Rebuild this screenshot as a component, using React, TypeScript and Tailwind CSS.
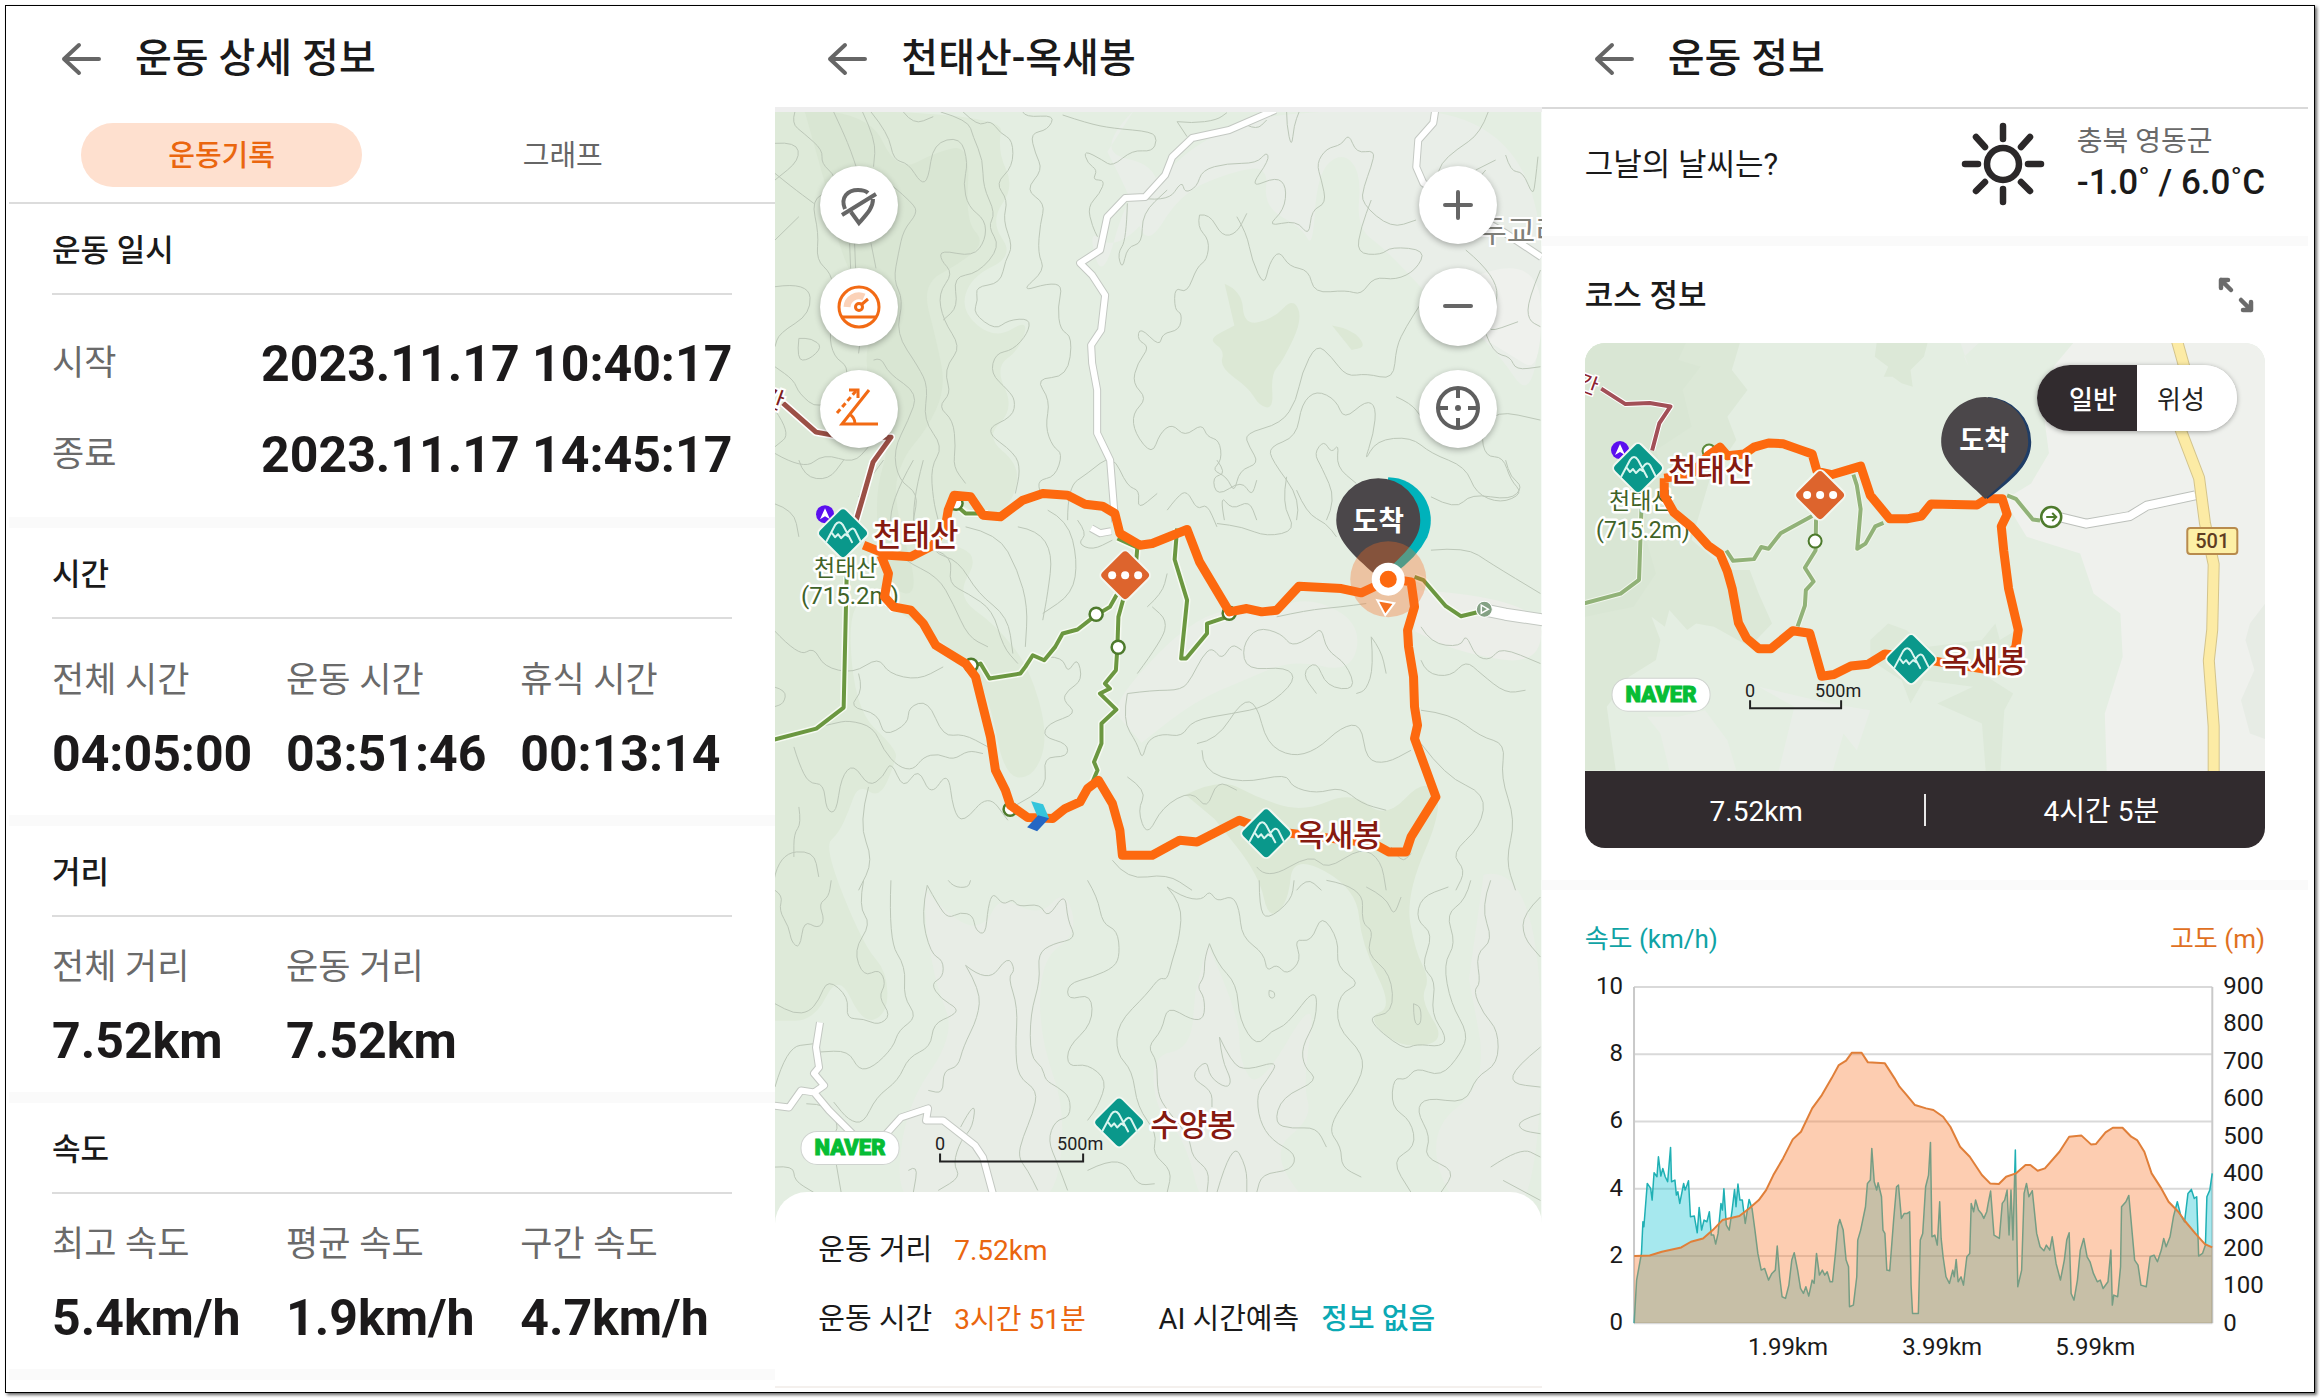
import { useState, type ReactNode } from 'react';

interface Stat {
  label: string;
  value: string;
}

const timeStats: Stat[] = [
  { label: '전체 시간', value: '04:05:00' },
  { label: '운동 시간', value: '03:51:46' },
  { label: '휴식 시간', value: '00:13:14' },
];

const distanceStats: Stat[] = [
  { label: '전체 거리', value: '7.52km' },
  { label: '운동 거리', value: '7.52km' },
];

const speedStats: Stat[] = [
  { label: '최고 속도', value: '5.4km/h' },
  { label: '평균 속도', value: '1.9km/h' },
  { label: '구간 속도', value: '4.7km/h' },
];

// contour lines, one list per map tile
const contoursTop = [
  'M52 36L45 70L70 100L108 150L105 190L135 230L125 270L85 300L100 400L95 480L125 520L130 580L140 620L120 700L130 770L160 800L150 860L100 930L60 880L50 840L12 800',
  'M130 36L150 100L165 155L175 200M162 430L164 505M205 430L215 505M172 430L174 505',
  'M188 36L215 120L210 200M250 260L290 310L298 340L270 390L260 460L250 540L270 600L255 700L300 800L320 860L310 960L350 1040L325 1100L330 1200L340 1260',
  'M205 36L240 100L250 180L280 190L305 250L320 240L330 130L385 110L400 190L390 250L400 320L435 360L435 420L410 470L345 450L345 480L370 520L340 580L350 660L385 740L360 790L355 830L365 880L340 920L370 960L375 1040L370 1100L395 1150',
  'M270 36L290 75L330 50M345 36L400 60L410 110L430 180L430 260L455 340L440 380L465 440L420 520L370 530L380 620L350 660',
  'M390 36L420 80L445 60L465 100L490 120L490 200L455 250L480 300L470 360L490 440L475 480L465 550L415 560L420 600L410 640L455 690L480 660L525 655L520 700L490 750L455 760L445 820L480 870L495 900L490 950L430 990L495 1060L505 1110L495 1180',
  'M510 36L515 52L575 45L560 90L525 100L535 160L550 210L515 270L555 310L545 370L540 460L555 510L505 575L560 550L590 555L580 620L585 690L610 710L600 830L535 835L565 900L555 980L570 1040L590 1060L575 1130L540 1140L545 1180',
  'M590 45L640 70L690 85L770 95L780 120L770 155L730 150L690 200L670 180L632 150L640 190L660 210L650 240L675 240L665 280L640 320L650 380L660 410',
  'M820 65L850 70L900 60L920 38M820 65L840 110M960 75L980 90L1000 60M730 290L800 310L830 240L835 280L860 260L870 210L920 190L980 190L1000 155L1005 180L965 265L1020 230L1040 260L1035 330L1000 380L1060 360L1085 410L1090 330L1120 310L1110 240L1100 190L1120 145L1150 135L1165 100L1180 160L1218 150L1210 200L1195 260L1190 310L1250 385L1300 360',
  'M1040 36L1040 75L1050 145L1055 75L1065 36M1445 36L1430 100L1380 150L1350 190L1340 240M1420 210L1460 180M1480 165L1490 215L1515 215L1535 290L1540 240L1545 170',
  'M720 310L718 420L700 460L710 510L720 440L750 430L750 340L800 270M940 350L960 400L970 480L995 560L1005 490L1025 450L1045 500L1085 510L1095 580L1160 570L1190 585L1215 530L1260 540L1300 510L1320 450L1250 440L1230 465L1180 460L1190 380L1210 300',
  'M865 345L860 380L885 420L880 480L860 500L840 580L815 560L815 630L830 640L825 690L790 700L785 740L745 680L740 720L765 740L740 790L730 850L760 895L730 940L735 1000L770 1065L785 1000L810 970L835 1010L870 970L880 1010L905 1020L910 1080L890 1110L920 1130L935 1180L945 1110L985 1090L965 1040L955 1000L1030 970L1060 900L1070 820L1100 730L1130 770L1160 830L1200 820L1255 840L1260 740L1280 680L1310 610',
  'M865 345L885 340L910 410L940 400L960 340M1260 890L1290 910L1310 950M1440 700L1455 760L1490 770L1500 810L1550 800M1400 450L1465 530L1460 640L1440 700L1505 665M1550 510L1525 600L1525 660L1550 680',
  'M1440 210L1400 280M1060 1260L1070 1200L1010 1080L1005 1040L1060 1010L1070 910L1100 870L1140 900L1155 960L1200 900L1220 920L1215 1000L1195 1090L1220 1020L1290 1010L1330 1060L1400 1100L1420 1180L1470 1210L1515 1180L1490 1140L1475 1070L1440 1070L1430 1000L1460 930L1550 960',
  'M1120 1260L1140 1200L1110 1100L1095 1060L1115 1020L1130 1060L1145 1030L1140 1100L1180 1150M12 930L45 1000L12 1040M12 1060L70 1110L110 1060L170 1090L200 1040M12 560L80 545L85 640L20 700L12 740M60 715L55 780L80 780L108 740L85 715L60 715M12 220L45 260L90 310M12 130L55 125L62 180L12 240M60 350L12 420',
  'M210 780L225 770L240 820L300 880L280 960L250 1050L260 1140L300 1180L290 1260M180 760L185 700M600 1260L600 1160L640 1120L690 1060L720 1160L745 1170L740 1230L780 1180M915 1260L905 1180L930 1230L965 1200L980 1260',
];

const contoursMid = [
  'M60 0L70 50L120 60L150 0M230 0L200 60L180 110M290 0L240 130L250 250L270 300L340 350L370 430L400 530L440 560M310 0L285 140L300 250L370 290L360 370L400 400L450 450L470 560L500 610',
  'M300 210L330 280L380 300L420 400L480 470L490 580M395 200L460 220L500 330L520 440L515 560M500 200L540 210L570 280L560 400L550 480M560 150L600 180L620 300L610 400L550 460',
  'M620 180L640 220L620 250L650 270L690 240M10 130L50 150L60 230M10 510L60 590L90 560L110 620L170 640L220 590L240 640L300 660L350 620',
  'M180 640L190 690L160 740L220 760L230 830L280 790L280 740L320 720L350 830L390 820L440 860M10 680L35 690L30 730L10 740M100 800L130 790L160 780L210 800L230 870L260 920L290 930L310 890L340 880L370 900L400 870L430 880',
  'M50 860L60 910L80 970L110 970L115 1050L135 1060L145 950L170 910L200 980L230 950L245 900L270 990L300 920L325 1010L360 930L370 1050L390 1090L440 1000L480 1080',
  'M10 1260L20 1180L90 1170L100 1250M60 1040L65 1090L50 1120L50 1190M200 980L180 1090L210 1200L180 1290',
  'M560 590L590 590L600 640L620 590L630 660L600 690L590 720L620 760L560 790L550 830L600 850L600 890L550 890L560 980L490 1040M720 700L770 690L830 690L850 650L870 590L890 560L910 600L930 550L950 570',
  'M720 700L710 780L740 850L750 900L760 840L790 820L830 830L850 780L930 760L1000 740L1060 660L1040 620L960 630L950 560L980 500L1030 520L1050 560L1090 530L1110 500L1120 570L1160 610L1180 690L1120 680L1100 600L1070 640L1100 700',
  'M1210 530L1215 620L1200 690L1180 700M1210 530L1230 570L1240 640M1310 500L1330 550L1390 560L1400 520L1420 590L1450 600L1470 560L1550 610M1310 600L1320 640L1370 650L1400 600L1430 640L1480 700L1520 690',
  'M860 850L900 840L950 720L980 730L1000 850L1050 890L1100 870L1150 800L1190 790L1200 900L1240 910L1290 870M1310 750L1370 760L1430 830L1480 850L1470 950L1500 1080L1480 1200L1500 1290M870 870L870 930L950 970L1040 940L1050 980L1100 1000L1150 980L1190 1030L1240 1050',
  'M1310 850L1360 950L1440 1000L1430 1100L1370 1180L1400 1230L1380 1290M720 950L760 990L740 1050L760 1130L790 1040L850 990L880 1050L900 960L940 990M980 1220L1000 1260L1090 1180L1120 1230L1190 1160L1230 1200L1240 1290M1250 1160L1270 1210L1290 1180',
  'M900 0L920 40L890 50L900 110L950 60L970 110L980 60M1040 50L1030 130L1060 210L1000 230L950 200L900 190M1060 90L1080 160L1120 190L1140 230M1330 110L1380 150L1410 100L1490 120L1515 80L1490 50L1480 0M800 150L820 110L840 90L860 150L880 130L900 200M1330 270L1400 260L1450 310L1550 400',
  'M760 440L790 400L800 340M740 640L790 540L800 480L770 440M1020 470L1080 450L1150 440L1200 430M690 1200L720 1260L800 1240L850 1290M1060 1290L1080 1250L1110 1290',
];

const contoursLow = [
  'M12 30L28 45L20 90L40 140L45 185L62 205L70 120L98 145L112 120L100 70L120 50L125 0M190 0L180 80L205 130L170 210L190 290L222 265L235 310L220 350L245 405L220 435L190 415L155 415L160 350L118 295L100 360L80 395L50 400L12 370',
  'M245 0L240 180L275 260L270 350L298 410L260 450L250 500L210 560L180 570L160 510L100 515M318 15L305 100L325 220L350 240L350 290L325 310L345 355L380 385L370 405L330 430L325 500L280 530L260 600L215 650L190 730L160 720L130 665',
  'M318 15L340 75L360 115L385 95L410 105L415 150L435 165L440 80L450 35L470 75L490 55L500 80L545 70L560 115L595 35L600 120L618 175L570 190L540 220L545 300L525 400L525 530L550 560L555 600L580 620L605 650L605 710L575 720L560 780L580 850L600 930',
  'M395 255L440 310L480 225L495 270L480 290L500 380L495 500L500 590L540 630L530 700L510 770L500 830L520 870L540 930M395 255L425 330L420 410L390 500L380 560L350 570L350 640L320 630M640 0L660 50L670 130L700 150L705 220L695 260L650 290L600 310L600 360L648 340L650 430L600 500L600 560L640 550L680 600L660 680L640 720',
  'M800 20L830 70L825 170L810 240L800 300L785 290L760 340L700 430L698 520L730 570L740 680L780 760L770 820L810 870L800 936M800 20L830 50L870 60L885 30L900 65L930 45L945 85L950 170L995 220L1000 275L1020 250L1040 285L1070 240L1055 175L1090 185L1110 100L1145 180L1140 260L1190 310L1145 340L1140 440L1195 520L1190 600L1120 740L1150 800L1150 860L1190 890',
  'M885 190L900 250L940 310L945 420L980 500L1010 450L1040 435L1100 315L1100 420L1070 500L1075 560L1105 600L1030 650L1015 730L1050 745L1100 740L1120 800M885 190L875 230L875 290L860 320L875 350L875 415L850 420L800 375L790 450L760 500L780 540L780 640L800 690L845 770L850 830L885 870L880 936',
  'M905 470L910 540L930 600L920 625L885 590L880 535L845 590L890 630L890 680M905 470L930 550L960 570L1025 540L1000 600L980 640L985 720L1010 780L1060 820L1050 870L990 880L980 936M985 0L985 80L1000 120L1050 60L1055 0M1120 0L1195 20L1190 130L1215 150L1200 220L1250 280L1255 400L1195 410L1275 510L1300 490L1350 500L1362 470L1330 400L1340 300L1310 260L1335 160L1300 120L1310 50L1365 20',
  'M1410 0L1400 60L1360 100L1380 190L1355 250L1370 370L1405 460L1390 520L1350 590L1300 560L1280 600L1255 590L1250 680L1290 720L1300 800L1250 840L1290 936M1450 0L1430 80L1455 180L1420 220L1430 310L1415 330L1435 400L1465 450L1465 550L1420 590L1400 670L1320 650L1300 690L1330 770L1315 830L1380 870L1350 936',
  'M1200 20L1240 50L1255 110L1270 50M1295 370L1295 430L1310 435L1310 380L1295 370M1005 330L1003 350L1015 355L1017 335L1005 330M1550 50L1515 100L1515 170L1550 230M1550 500L1500 560L1490 610L1550 620M1550 700L1505 720L1510 750L1550 760M1450 860L1510 800L1550 830M1475 900L1550 960M360 0L370 20L400 22L405 0M12 620L35 500L90 490M12 860L50 855L50 900L90 936',
  'M640 870L680 840L720 850L740 915L775 910M385 740L415 655L410 740L385 780L370 850L385 890L340 930M900 936L930 780L960 860L960 936M75 670L120 670L140 740L130 760M135 850L145 936M280 870L300 850L290 936',
];

// areas drawn under the contours: path and fill
const landCover: [string, string][] = [
  ['M735 0L650 60L790 80L770 155L690 200L640 170L670 250L720 120L800 90L860 50L1000 0L1568 0L1568 440L1460 330L1380 300L1250 200L1190 170L1200 90L1160 60L1110 90L1100 200L1080 170L1000 140L1010 80L930 90L830 120L760 200L730 130L680 60Z', '#e9eee8'],
  ['M1430 240L1568 200L1568 380L1500 350L1430 320Z', '#eff1ed'],
  ['M0 0L470 0L455 60L490 110L440 160L490 210L400 240L380 290L450 330L520 300L500 345L450 370L490 430L430 470L500 510L490 560L440 590L360 560L340 620L420 640L370 700L450 740L520 800L560 900L530 960L470 960L440 850L400 800L300 740L150 680L160 860L250 920L245 940L215 990L170 970L150 1010L130 1040L100 1060L180 1200L230 1240L230 1300L180 1315L130 1240L80 1310L0 1310Z', '#deead9'],
  ['M60 0L190 0L250 90L330 60L400 50L390 160L430 190L380 220L300 250L330 330L350 400L310 460L260 500L240 560L300 700L230 690L200 560L240 470L180 380L200 300L130 200L100 100Z', '#d9e6d3'],
  ['M920 250L955 260L960 310L1020 300L1060 270L1080 300L1040 360L1015 380L1020 430L990 425L970 400L910 370L920 345L885 330L940 310Z', '#dce8d5'],
  ['M1140 310L1180 315L1210 340L1180 345Z', '#dce8d5'],
  ['M700 870L690 850L870 720L1000 720L1100 700L1200 740L1180 810L1060 790L960 820L860 850L750 910Z', '#e9eee7'],
  ['M1300 690L1568 700L1568 800L1400 780L1310 750Z', '#eceee9'],
  ['M840 985L910 960L990 990L1080 1010L1180 980L1250 1020L1330 960L1370 1000L1290 1130L1310 1210L1340 1250L1320 1280L1375 1340L1280 1350L1210 1305L1265 1290L1200 1200L1190 1120L1060 1070L1050 1140L1010 1165L990 1100L900 1020Z', '#dce8d5'],
  ['M305 1120L370 1170L430 1175L460 1130L540 1160L595 1120L620 1185L545 1220L540 1330L600 1450L560 1600L250 1600L260 1440L370 1330L330 1260L310 1180Z', '#e8ede6'],
  ['M885 1200L950 1300L950 1370L990 1410L1110 1265L1080 1400L1100 1450L1010 1500L1120 1600L880 1600L840 1480L780 1440L770 1360L850 1350L860 1270Z', '#e8ede6'],
  ['M1450 1100L1568 1080L1568 1600L1400 1600L1330 1470L1460 1400L1420 1250Z', '#e8ede6'],
];

const miniLandCover: [string, string][] = [
  ['M10 0L360 0L340 90L375 150L330 230L350 300L290 420L250 600L330 690L380 690L400 760L430 850L380 920L300 860L260 850L240 870L200 810L190 860L160 830L180 900L170 960L110 1010L60 1100L80 1290L10 1290Z', '#dce8d7'],
  ['M10 0L240 0L220 60L270 80L230 150L250 260L170 330L190 420L140 560L170 700L120 800L10 830Z', '#d9e6d4'],
  ['M665 0L780 0L770 50L740 90L745 140L720 130L700 110L680 110L690 80L660 50Z', '#dce8d7'],
  ['M850 0L900 0L860 50L870 80Z', '#e9eee8'],
  ['M1110 0L1580 0L1580 1320L1180 1320L1175 1120L1215 950L1210 820L1150 760L1120 640L1000 590L950 480L1010 430L1050 340L1040 240L1080 170L1060 80Z', '#eff1ed'],
  ['M1540 780L1500 850L1490 900L1510 990L1480 1080L1500 1180L1540 1200Z', '#e7ece5'],
  ['M650 900L690 850L730 870L780 920L900 900L930 850L940 900L990 860L980 980L900 1000L970 1060L950 1110L940 1320L910 1320L900 1150L800 1090L880 1040L770 1020L740 1090L720 1020L650 960Z', '#dde9d9'],
  ['M150 1130L180 1180L200 1290L350 1290L330 1200L280 1110L220 1130Z', '#e9eee7'],
  ['M400 1040L480 1100L440 1320L560 1320L590 1180L620 1230L650 1110L560 1090Z', '#e9eee8'],
];

const routePath =
  'M190 255L240 285L285 290L330 255L355 195L360 150L372 105L405 110L430 165L465 170L510 120L550 100L600 105L635 132L670 138L695 160L705 220L745 255L770 250L840 208L865 305L925 455L960 445L990 455L1020 450L1065 378L1150 385L1190 398L1230 370L1245 355L1290 365L1297 440L1283 510L1285 560L1295 650L1297 740L1303 795L1297 835L1340 1010L1290 1130L1280 1175L1245 1175L1215 1150L1000 1110L945 1080L860 1145L825 1140L770 1185L710 1185L705 1110L690 1030L662 960L640 985L625 1025L595 1045L570 1075L520 1072L485 1035L475 990L455 930L445 830L415 650L395 610L335 555L310 490L285 450L250 440L232 410L240 340L225 285';

const trailPath =
  'M156 350L150 742L95 805L5 840M405 620L425 610L443 655L505 640L515 620L530 585L553 600L575 560L590 520L620 508L657 465L685 440L700 400M715 400L702 470L700 560L697 630L675 670L685 685L665 700L698 748L668 790L668 850L653 905L660 930L650 965M820 205L815 298L840 420L828 595L838 595L880 520L880 490L925 468M372 130L395 160L440 160M1297 350L1315 360L1360 438L1390 468L1440 450M700 235L740 262L738 300';

const miniRoutePath =
  'M215 430L215 480L235 530L270 570L305 625L330 650L345 700L355 750L368 850L385 895L410 925L435 925L480 873L515 880L540 1005L565 1000L600 975L635 970L670 940L725 950L900 990L940 920L945 870L925 750L915 640L910 570L922 535L912 490L880 490L860 508L765 505L745 540L715 548L680 548L640 480L620 395L560 420L530 410L520 360L490 345L460 330L430 328L400 340L380 360L345 365L330 340L305 365L270 420L215 430';

const miniTrailPath =
  'M168 520L163 725L125 765L45 795M343 640L357 670L400 665L415 630L430 635L455 590L520 540M528 550L527 640L505 690L523 730L507 755L505 800L490 860M605 420L612 450L620 520L613 635L630 620L650 570L667 560M922 480L940 490L975 550L990 553';

const elevationLine =
  'M153 1068L185 1066L210 1055L250 1042L270 1025L295 1015L315 990L335 960L370 948L390 925L410 900L425 870L440 825L460 775L480 718L497 695L520 625L540 585L560 535L575 495L590 482L602 458L622 458L635 487L670 490L690 535L700 560L715 585L732 615L755 625L770 630L790 650L805 680L825 740L845 770L870 825L887 850L905 852L920 830L940 820L960 795L970 795L985 812L1000 805L1030 755L1050 710L1075 706L1095 733L1105 732L1125 697L1140 683L1160 683L1178 710L1190 720L1205 755L1220 820L1240 865L1255 905L1275 935L1290 965L1310 1000L1330 1032L1345 1042';

const speedLine =
  'M153 1269L158 1140L168 1060L171 965L173 980L180 850L187 865L190 900L194 818L200 830L203 770L208 828L212 805L217 830L222 845L228 742L230 845L237 840L240 885L243 875L247 910L255 850L258 870L262 855L265 842L269 950L277 948L283 998L287 922L292 990L297 960L303 965L308 935L312 1005L317 1005L321 1032L326 1000L332 910L335 930L338 866L343 975L349 990L355 930L360 868L363 920L367 852L371 900L376 900L382 970L390 898L396 925L402 990L408 1060L415 1110L422 1105L430 1140L437 1120L444 1110L448 1038L453 1130L458 1190L465 1195L472 1155L478 1080L483 1058L490 1110L496 1165L502 1180L507 1160L513 1188L520 1140L524 1150L529 1060L535 1125L541 1110L546 1125L551 1115L557 1145L562 1145L568 1060L573 980L577 958L584 990L590 1080L595 1100L597 1220L605 1215L612 1130L614 1020L620 990L630 920L634 850L640 840L643 745L648 845L653 870L656 848L663 890L666 990L670 1000L674 1110L680 1112L688 960L694 860L698 855L704 955L710 940L716 940L721 935L724 1155L727 1240L739 1240L743 1020L748 1000L754 860L760 825L764 727L767 1010L773 1005L778 1035L783 905L786 1015L790 1070L796 1130L803 1150L810 1110L813 1130L817 1078L821 1145L827 1130L832 1155L839 1070L845 1060L848 910L853 935L857 900L863 930L869 940L874 955L880 935L883 910L888 873L895 1005L906 1015L912 910L917 900L922 870L926 1005L930 870L934 1020L939 750L944 1160L952 1110L957 880L962 850L967 890L974 872L983 1000L990 1040L998 1052L1003 1035L1010 1050L1015 1010L1023 1090L1032 1140L1040 1080L1045 1020L1050 998L1054 1180L1060 1200L1067 1140L1073 1050L1080 1015L1087 1070L1093 1085L1100 1120L1108 1145L1114 1140L1120 1165L1130 1145L1136 1050L1139 1215L1142 1185L1150 1190L1156 1100L1158 920L1167 905L1173 886L1180 1000L1185 1080L1192 1095L1198 1155L1209 1160L1217 1070L1225 1065L1232 1085L1240 1050L1245 1015L1250 1040L1258 1010L1265 950L1273 905L1280 945L1288 965L1295 880L1302 868L1308 895L1313 890L1317 1068L1325 1060L1331 1035L1334 890L1340 870L1345 820';

// rounds the corners of an M/L path with curves through segment midpoints
function smooth(d: string) {
  return d
    .split('M')
    .filter(Boolean)
    .map((part) => {
      const pts = part.replace('Z', '').split('L').map((p) => p.split(' ').map(Number));
      let out = `M${pts[0][0]} ${pts[0][1]}`;
      for (let i = 1; i < pts.length - 1; i++) {
        const [x, y] = pts[i];
        const [nx, ny] = pts[i + 1];
        out += `Q${x} ${y} ${(x + nx) / 2} ${(y + ny) / 2}`;
      }
      const last = pts[pts.length - 1];
      return `${out}L${last[0]} ${last[1]}`;
    })
    .join('');
}

function BackHeader({ title }: { title: string }) {
  return (
    <header className="flex h-[97px] items-center pl-[50px]">
      <button type="button" aria-label="뒤로" className="mr-[34px] w-[42px]">
        <svg viewBox="0 0 42 36" className="w-full" fill="none" stroke="#666" strokeWidth="4" strokeLinecap="round" strokeLinejoin="round">
          <path d="M40 18H5M20 4L5 18L20 32" />
        </svg>
      </button>
      <h1 className="text-[40px] leading-[56px] font-medium">{title}</h1>
    </header>
  );
}

function SectionTitle({ children }: { children: ReactNode }) {
  return <h2 className="flex h-[91px] items-center border-b-2 border-[#dcdcdc] pt-[6px] text-[31px] font-medium">{children}</h2>;
}

function StatSection({ title, stats, roomy }: { title: string; stats: Stat[]; roomy?: boolean }) {
  return (
    <section className="border-t-[11px] border-[#fafafa] px-[43px]">
      <SectionTitle>{title}</SectionTitle>
      <dl className={`grid grid-cols-[234fr_234fr_212fr] ${roomy ? 'pt-[38px] pb-[31px]' : 'pt-[27px] pb-[21px]'}`}>
        {stats.map((s) => (
          <div key={s.label} className="whitespace-nowrap">
            <dt className="text-[35px] leading-[48px] text-[#6a6a6a]">{s.label}</dt>
            <dd className="mt-[19px] text-[50px] leading-[60px] font-bold text-[#1c1a1b]">{s.value}</dd>
          </div>
        ))}
      </dl>
    </section>
  );
}

function PeakMarker({ x, y }: { x: number; y: number }) {
  return (
    <g transform={`translate(${x} ${y})`}>
      <rect x="-19" y="-19" width="38" height="38" rx="5" transform="rotate(45)" fill="#0a988b" stroke="#f2f7f0" strokeWidth="2" />
      <path d="M-17 9L-8 -8Q-4 -14 0 -8L9 9M-11 0L-8 4L-5 1L-2 5L2 1L5 3M5 -1Q9 -7 12 -3L18 9" fill="none" stroke="#d9f5ef" strokeWidth="2" strokeLinecap="round" strokeLinejoin="round" />
    </g>
  );
}

function JunctionMarker({ x, y }: { x: number; y: number }) {
  return (
    <g transform={`translate(${x} ${y})`}>
      <rect x="-19" y="-19" width="38" height="38" rx="5" transform="rotate(45)" fill="#dd642d" stroke="#f2f7f0" strokeWidth="2" />
      <circle cx="-13" r="4" fill="#fff" />
      <circle r="4" fill="#fff" />
      <circle cx="13" r="4" fill="#fff" />
    </g>
  );
}

function SummitDot({ x, y }: { x: number; y: number }) {
  return (
    <g transform={`translate(${x} ${y})`}>
      <circle r="9" fill="#5b0fef" />
      <path d="M0 -6L5 5L0 2L-5 5Z" fill="#fff" />
    </g>
  );
}

function MapLabel({ x, y, size = 31, color = '#861a10', children }: { x: number; y: number; size?: number; color?: string; children: ReactNode }) {
  return (
    <text x={x} y={y} fontSize={size} fill={color} stroke="#fff" strokeWidth="5" strokeLinejoin="round" paintOrder="stroke" className={size > 30 ? 'font-medium' : ''}>
      {children}
    </text>
  );
}

function MapScale({ x, y, width }: { x: number; y: number; width: number }) {
  return (
    <g>
      <path d={`M${x} ${y - 8}V${y}H${x + width}V${y - 8}`} fill="none" stroke="#222" strokeWidth="2" />
      <g fontSize="18" fill="#222" textAnchor="middle">
        <text x={x} y={y - 11}>0</text>
        <text x={x + width - 3} y={y - 11}>500m</text>
      </g>
    </g>
  );
}

function NaverBadge({ x, y }: { x: number; y: number }) {
  return (
    <g>
      <rect x={x} y={y} width="98" height="33" rx="16" fill="#fff" stroke="#cfd3cf" strokeWidth="1" />
      <text x={x + 49} y={y + 24} fontSize="22" fill="#06bd35" stroke="#06bd35" strokeWidth="1" textAnchor="middle" className="font-black">NAVER</text>
    </g>
  );
}

function CourseMap() {
  return (
    <svg viewBox="0 0 766 1112" preserveAspectRatio="xMidYMin slice" className="absolute inset-0 size-full" role="img" aria-label="천태산-옥새봉 지도">
      <rect width="766" height="1112" fill="#e4eee2" />
      <g transform="translate(0 -2) scale(.4885 .695)">
        {landCover.map(([d, fill]) => <path key={d} d={smooth(d)} fill={fill} />)}
      </g>

      <g fill="none" stroke="#bcc7b8" strokeWidth="1" strokeLinejoin="round">
        <g transform="translate(-6 -12) scale(.4975 .3333)">
          {contoursTop.map((d) => <path key={d} d={smooth(d)} vectorEffect="non-scaling-stroke" />)}
        </g>
        <g transform="translate(-6 348) scale(.4975 .3333)">
          {contoursMid.map((d) => <path key={d} d={smooth(d)} vectorEffect="non-scaling-stroke" />)}
        </g>
        <g transform="translate(-6 768) scale(.4975 .3333)">
          {contoursLow.map((d) => <path key={d} d={smooth(d)} vectorEffect="non-scaling-stroke" />)}
        </g>
      </g>

      {/* roads */}
      {[{ c: '#c3c8c2', w: 8 }, { c: '#fff', w: 6 }].map(({ c, w }) => (
        <g key={c} fill="none" stroke={c} strokeWidth={w} strokeLinejoin="round">
          <path d="M500 -2L454 18L417 26L397 45L390 63L370 85L350 86L332 105L325 138L305 151L317 163L330 183L326 218L316 233L317 251L322 278L322 321L335 348L340 410M660 -2L658 11L643 28L641 55L648 71L690 98L730 121L766 145M316 416L325 421L336 419" />
          <path d="M710 498L730 502L770 508" strokeWidth={w + 5} />
          <path d="M45 910L41 935L44 955L39 961L49 973L39 980L54 998L81 1025M39 980L26 978L14 995L-2 993M108 1025L126 1005L153 996L151 1008L168 1008L200 1033L208 1045L218 1082L222 1112" />
        </g>
      ))}
      <text x="703" y="130" fontSize="31" fill="#80807a" stroke="#fff" strokeWidth="4" paintOrder="stroke">두교리</text>

      {/* ridge trail */}
      <g fill="none" strokeLinejoin="round">
        <path d="M8 291L41 320L69 325L116 325L98 350L88 385L80 412" stroke="#fff" strokeWidth="8" />
        <path d="M8 291L41 320L69 325L116 325L98 350L88 385L80 412" stroke="#9b5046" strokeWidth="5" />
      </g>
      <text x="-14" y="296" fontSize="24" fill="#7d1d1d" stroke="#fff" strokeWidth="4" paintOrder="stroke" transform="rotate(20 0 290)">간</text>

      <g transform="translate(-6 348) scale(.4975 .3333)" fill="none" strokeLinejoin="round">
        <path d={trailPath} stroke="#f6faf2" strokeWidth="7" vectorEffect="non-scaling-stroke" />
        <path d={trailPath} stroke="#6b9740" strokeWidth="4" vectorEffect="non-scaling-stroke" />
      </g>
      <MapLabel x={39} y={464} size={23} color="#3f6328">천태산</MapLabel>
      <MapLabel x={26} y={492} size={24} color="#3f6328">(715.2m)</MapLabel>
      <g fill="#fff" stroke="#4d7a2c" strokeWidth="2.5">
        <circle cx="321" cy="502" r="6.5" />
        <circle cx="343" cy="535" r="6.5" />
        <circle cx="454" cy="501" r="6.5" />
        <circle cx="196" cy="553" r="6.5" />
        <circle cx="181" cy="391" r="6.5" />
        <circle cx="235" cy="697" r="6.5" />
      </g>
      <g transform="translate(709 497)">
        <circle r="8" fill="#84a184" stroke="#fff" strokeWidth="1" />
        <path d="M-3 -4L4 0L-3 4Z" fill="none" stroke="#fff" strokeWidth="1.5" />
      </g>

      <path transform="translate(-6 348) scale(.4975 .3333)" d={routePath} fill="none" stroke="#fd690f" strokeWidth="9" strokeLinejoin="round" vectorEffect="non-scaling-stroke" />
      <path d="M256 689L268 692L274 706H263Z" fill="#35c5dc" />
      <path d="M274 706L262 719L252 715L263 703Z" fill="#2467c4" />

      <MapLabel x={98} y={434}>천태산</MapLabel>
      <MapLabel x={521} y={734}>옥새봉</MapLabel>
      <MapLabel x={375} y={1024}>수양봉</MapLabel>
      <SummitDot x={50} y={402} />
      <PeakMarker x={68} y={421} />
      <PeakMarker x={491} y={721} />
      <PeakMarker x={344} y={1010} />
      <JunctionMarker x={350} y={463} />

      {/* finish pin and current position */}
      <path d="M613 365A43 43 0 0 1 652 425Q642 445 618 462L600 455Z" fill="#00b2bb" />
      <path d="M603 366A42 42 0 0 1 645 408C645 430 625 444 604 466C582 446 561 430 561 408A42 42 0 0 1 603 366Z" fill="#4b474a" />
      <circle cx="613" cy="467" r="38" fill="#fb6e20" opacity=".33" />
      <text x="603" y="419" fontSize="28" fill="#fff" textAnchor="middle" className="font-bold">도착</text>
      <circle cx="613" cy="467" r="12.5" fill="#fd690f" stroke="#fff" strokeWidth="8" />
      <path d="M602 488L619 491L610 503Z" fill="#f5701f" stroke="#fff" strokeWidth="2" />

      <NaverBadge x={26} y={1019} />
      <MapScale x={165} y={1049} width={143} />
    </svg>
  );
}

const roundButton =
  'flex size-[78px] items-center justify-center rounded-full bg-white shadow-[0_2px_6px_rgba(0,0,0,0.3)]';

function MapControls() {
  return (
    <div className="relative flex justify-between px-[45px] pt-[54px]">
      <div className="flex flex-col gap-6">
        <button type="button" aria-label="위치 표시 끄기" className={roundButton}>
          <svg viewBox="0 0 78 78" className="size-full" fill="none" stroke="#666" strokeWidth="4">
            <path d="M25 43C20 31 28 24 38 24C43 24 46 25 48 27M22 49L56 28M53 33C53 42 47 48 39 57L31 46" />
          </svg>
        </button>
        <button type="button" aria-label="속도 보기" className={roundButton}>
          <svg viewBox="0 0 78 78" className="size-full" fill="none" stroke="#f26a14" strokeWidth="3">
            <path d="M27 39A12 12 0 0 1 44 29" stroke="#fbd2b8" strokeWidth="7" />
            <circle cx="39" cy="39" r="20" />
            <path d="M22 49H56M41 37L48 31" />
            <circle cx="39" cy="39" r="3.5" />
          </svg>
        </button>
        <button type="button" aria-label="경사도 보기" className={roundButton}>
          <svg viewBox="0 0 78 78" className="size-full" fill="none" stroke="#f26a14" strokeWidth="3">
            <path d="M17 43L36 21" strokeDasharray="5 3" />
            <path d="M29 20H38V28" />
            <path d="M49 20L22 54H58M29 44Q35 47 35 54" />
          </svg>
        </button>
      </div>
      <div className="flex flex-col gap-6">
        <button type="button" aria-label="확대" className={roundButton}>
          <svg viewBox="0 0 78 78" className="size-full" stroke="#666" strokeWidth="4" strokeLinecap="round">
            <path d="M26 39H52M39 26V52" />
          </svg>
        </button>
        <button type="button" aria-label="축소" className={roundButton}>
          <svg viewBox="0 0 78 78" className="size-full" stroke="#666" strokeWidth="4" strokeLinecap="round">
            <path d="M26 38H52" />
          </svg>
        </button>
        <button type="button" aria-label="현재 위치" className={roundButton}>
          <svg viewBox="0 0 78 78" className="size-full" fill="none" stroke="#5f5f5f" strokeWidth="4">
            <circle cx="39" cy="38" r="20" />
            <path d="M39 18V28M39 48V58M19 38H29M49 38H59" />
            <circle cx="39" cy="38" r="3" fill="#5f5f5f" stroke="none" />
          </svg>
        </button>
      </div>
    </div>
  );
}

function MiniMap() {
  const [mode, setMode] = useState<'normal' | 'satellite'>('normal');

  return (
    <div className="relative">
      <svg viewBox="0 0 680 428" className="block w-full" role="img" aria-label="코스 지도">
        <rect width="680" height="428" fill="#e4eee2" />
        <g transform="translate(-5 -3) scale(.4464 .3333)">
          {miniLandCover.map(([d, fill]) => <path key={d} d={d} fill={fill} />)}
        </g>

        <g transform="translate(-25 -13) scale(.4847 .3444)" fill="none" strokeLinejoin="round">
          <g>
            <path d="M1030 543L1085 562L1175 540L1210 510L1310 480" stroke="#bcc0bb" strokeWidth="10" vectorEffect="non-scaling-stroke" />
            <path d="M1030 543L1085 562L1175 540L1210 510L1310 480" stroke="#fff" strokeWidth="8" vectorEffect="non-scaling-stroke" />
            <path d="M1272 30L1290 120L1280 290L1318 430L1330 560L1348 680L1345 870L1338 960L1348 1150L1348 1290" stroke="#d3c48c" strokeWidth="12" vectorEffect="non-scaling-stroke" />
            <path d="M1272 30L1290 120L1280 290L1318 430L1330 560L1348 680L1345 870L1338 960L1348 1150L1348 1290" stroke="#fceba5" strokeWidth="10" vectorEffect="non-scaling-stroke" />
          </g>
          <path d="M85 170L135 215L185 212L228 222L205 270L190 350" stroke="#fff" strokeWidth="6" vectorEffect="non-scaling-stroke" />
          <path d="M85 170L135 215L185 212L228 222L205 270L190 350" stroke="#a25057" strokeWidth="4" vectorEffect="non-scaling-stroke" />
          <path d={miniTrailPath} stroke="#f1f6ec" strokeWidth="6" vectorEffect="non-scaling-stroke" />
          <path d={miniTrailPath} stroke="#91b278" strokeWidth="4" vectorEffect="non-scaling-stroke" />
        </g>
        <text x="-7" y="48" fontSize="22" fill="#8d2430" stroke="#fff" strokeWidth="3" paintOrder="stroke" transform="rotate(20 0 40)">간</text>
        <MapLabel x={24} y={166} size={23} color="#3f6328">천태산</MapLabel>
        <MapLabel x={11} y={195} size={23} color="#3f6328">(715.2m)</MapLabel>
        <circle cx="124" cy="108" r="6.5" fill="#fff" stroke="#5d8a3a" strokeWidth="2" />

        <path transform="translate(-25 -13) scale(.4847 .3444)" d={miniRoutePath} fill="none" stroke="#fd690f" strokeWidth="9" strokeLinejoin="round" vectorEffect="non-scaling-stroke" />
        <circle cx="230" cy="198" r="6.5" fill="#fff" stroke="#4d7a2c" strokeWidth="2" />
        <g transform="translate(466 174)" fill="none" stroke="#4d7a2c" strokeWidth="2.5">
          <circle r="10" fill="#fff" />
          <path d="M-5 0H4M1 -4L5 0L1 4" strokeWidth="2" />
        </g>
        <rect x="602" y="185" width="50" height="26" rx="3" fill="#fdf0a6" stroke="#b88b4d" strokeWidth="2" />
        <text x="627" y="205" fontSize="20" fill="#5f3d22" textAnchor="middle" className="font-medium">501</text>

        <MapLabel x={83} y={138}>천태산</MapLabel>
        <MapLabel x={356} y={329}>옥새봉</MapLabel>
        <SummitDot x={35} y={107} />
        <PeakMarker x={53} y={125} />
        <PeakMarker x={326} y={316} />
        <JunctionMarker x={235} y={152} />

        <path d="M403 54A45 45 0 0 1 446 99C446 120 430 135 402 156L385 130Z" fill="#1f3d66" />
        <path d="M400 54A44 44 0 0 1 443 99C443 120 424 134 400 156C378 134 356 120 356 99A44 44 0 0 1 400 54Z" fill="#4b474a" />
        <text x="399" y="107" fontSize="27" fill="#fff" textAnchor="middle" className="font-bold">도착</text>

        <NaverBadge x={27} y={335} />
        <MapScale x={165} y={365} width={91} />
      </svg>
      <div className="absolute top-[22px] right-[28px] flex h-[66px] w-[200px] overflow-hidden rounded-full bg-white text-[26px] shadow-[0_1px_5px_rgba(0,0,0,0.35)]">
        <button
          type="button"
          onClick={() => setMode('normal')}
          className={`flex-1 pt-1 pl-3 font-medium ${mode === 'normal' ? 'bg-[#312b2e] text-white' : 'bg-white text-[#222]'}`}
        >
          일반
        </button>
        <button
          type="button"
          onClick={() => setMode('satellite')}
          className={`flex-1 pt-1 pr-3 ${mode === 'satellite' ? 'bg-[#312b2e] text-white' : 'bg-white text-[#222]'}`}
        >
          위성
        </button>
      </div>
    </div>
  );
}

function SpeedChart() {
  const left = ['10', '8', '6', '4', '2', '0'];
  const right = ['900', '800', '700', '600', '500', '400', '300', '200', '100', '0'];

  return (
    <svg viewBox="0 0 680 396" className="block w-full" role="img" aria-label="속도와 고도 그래프">
      <g stroke="#d9d9d9" strokeWidth="2">
        {left.map((v, i) => <path key={v} d={`M49 ${17 + i * 67.2}H627`} />)}
        <path d="M49 17V353M627 17V353" stroke="#c9c9c9" />
      </g>
      <g transform="translate(-25 -70) scale(.4847 .3333)">
        <path d={`${speedLine}L1345 1269Z`} fill="#00bccd" fillOpacity=".35" />
        <path d={speedLine} fill="none" stroke="#1fb0b4" strokeWidth="1.5" strokeLinejoin="round" vectorEffect="non-scaling-stroke" />
        <path d={`${elevationLine}L1345 1269L153 1269Z`} fill="#fb823c" fillOpacity=".4" />
        <path d={elevationLine} fill="none" stroke="#e07f39" strokeWidth="2" strokeLinejoin="round" vectorEffect="non-scaling-stroke" />
      </g>
      <g fontSize="24" fill="#1a1a1a">
        <g textAnchor="end">
          {left.map((v, i) => <text key={v} x="38" y={24 + i * 67.2}>{v}</text>)}
        </g>
        {right.map((v, i) => <text key={v} x="638" y={24 + i * 37.4}>{v}</text>)}
        <g textAnchor="middle">
          <text x="203" y="385">1.99km</text>
          <text x="357" y="385">3.99km</text>
          <text x="510" y="385">5.99km</text>
        </g>
      </g>
    </svg>
  );
}

function RecordPanel() {
  const [tab, setTab] = useState<'record' | 'graph'>('record');
  const tabs = [
    { id: 'record', label: '운동기록' },
    { id: 'graph', label: '그래프' },
  ] as const;

  return (
    <section className="flex flex-col">
      <BackHeader title="운동 상세 정보" />
      <div className="grid grid-cols-2 gap-[60px] border-b-2 border-[#dcdcdc] px-[72px] pt-[16px] pb-[15px]">
        {tabs.map((t) => (
          <button
            key={t.id}
            type="button"
            onClick={() => setTab(t.id)}
            className={`h-[64px] rounded-full pt-[4px] text-[29px] ${tab === t.id ? 'bg-[#fee0cf] font-medium text-[#ea660f]' : 'text-[#666]'}`}
          >
            {t.label}
          </button>
        ))}
      </div>
      <section className="px-[43px] pb-[16px]">
        <SectionTitle>운동 일시</SectionTitle>
        <dl className="pt-[24px]">
          {[['시작', '2023.11.17 10:40:17'], ['종료', '2023.11.17 14:45:17']].map(([label, value]) => (
            <div key={label} className="flex h-[91px] items-center justify-between">
              <dt className="text-[35px] text-[#6a6a6a]">{label}</dt>
              <dd className="text-[50px] font-bold text-[#1c1a1b]">{value}</dd>
            </div>
          ))}
        </dl>
      </section>
      <StatSection title="시간" stats={timeStats} roomy />
      <StatSection title="거리" stats={distanceStats} />
      <StatSection title="속도" stats={speedStats} />
      <div className="h-[11px] bg-[#fafafa]" />
    </section>
  );
}

function MapPanel() {
  return (
    <section className="flex flex-col">
      <BackHeader title="천태산-옥새봉" />
      <div className="relative flex-1 overflow-hidden border-t-[5px] border-[#eeeeee]">
        <CourseMap />
        <MapControls />
      </div>
      <div className="relative -mt-[32px] rounded-t-[32px] border-b-2 border-[#f4f0ed] bg-white px-[43px] pt-[24px] pb-[32px] text-[29px]">
        <dl className="grid grid-cols-[340fr_340fr] whitespace-nowrap">
          <div className="flex h-[69px] items-center gap-[22px]">
            <dt>운동 거리</dt>
            <dd className="text-[28px] text-[#ea660f]">7.52km</dd>
          </div>
          <div className="col-start-1 flex h-[69px] items-center gap-[22px]">
            <dt>운동 시간</dt>
            <dd className="text-[28px] text-[#ea660f]">3시간 51분</dd>
          </div>
          <div className="flex h-[69px] items-center gap-[22px]">
            <dt>AI 시간예측</dt>
            <dd className="font-medium text-[#0ba9b4]">정보 없음</dd>
          </div>
        </dl>
      </div>
    </section>
  );
}

function InfoPanel() {
  return (
    <section className="flex flex-col">
      <BackHeader title="운동 정보" />
      <div className="flex h-[129px] items-center justify-between border-t-2 border-[#d9d9d9] px-[43px] pb-[18px]">
        <h2 className="pt-1 text-[31px]">그날의 날씨는?</h2>
        <div className="flex items-center gap-[32px]">
          <svg viewBox="0 0 84 84" className="w-[84px]" fill="none" stroke="#2b2829" strokeWidth="6.5" strokeLinecap="round" role="img" aria-label="맑음">
            <circle cx="42" cy="42" r="16" />
            <path d="M42 4V17M42 67V80M4 42H17M67 42H80M15 15L24 25M69 15L60 25M15 69L24 60M69 69L60 60" />
          </svg>
          <div>
            <p className="text-[28px] leading-[38px] text-[#6a6a6a]">충북 영동군</p>
            <p className="text-[35px] leading-[44px] font-medium">-1.0˚ / 6.0˚C</p>
          </div>
        </div>
      </div>
      <div className="border-y-[10px] border-[#fafafa] px-[43px] pb-[32px]">
        <div className="flex h-[97px] items-center justify-between pr-[9px]">
          <h2 className="pt-1 text-[31px] font-medium">코스 정보</h2>
          <button type="button" aria-label="지도 크게 보기">
            <svg viewBox="0 0 40 40" className="w-[40px]" fill="none" stroke="#6b6b6b" strokeWidth="4.5" strokeLinecap="round" strokeLinejoin="round">
              <path d="M5 5L15 15M5 13V5H12M25 25L35 35M35 27V35H27" />
            </svg>
          </button>
        </div>
        <div className="overflow-hidden rounded-[20px]">
          <MiniMap />
          <div className="grid h-[77px] grid-cols-[1fr_2px_1fr] items-center bg-[#312b2e] text-center text-[28px] text-white">
            <span className="pt-1 pl-1">7.52km</span>
            <span className="h-[32px] bg-[#e8e8e8]" />
            <span className="pt-1 pl-3">4시간 5분</span>
          </div>
        </div>
      </div>
      <div className="px-[43px] pt-[30px]">
        <div className="mb-[12px] flex justify-between text-[26px] leading-[38px]">
          <span className="text-[#10a3a5]">속도 (km/h)</span>
          <span className="text-[#e07022]">고도 (m)</span>
        </div>
        <SpeedChart />
      </div>
    </section>
  );
}

export default function App() {
  return (
    <main className="flex min-h-screen flex-col bg-white p-[5px] font-['Roboto','Noto_Sans_CJK_KR',sans-serif] text-[#1a1a1a]">
      <div className="grid flex-1 grid-cols-3 border border-black pt-[4px] pr-[6px] pb-[4px] pl-[3px] shadow-[2px_2px_3px_rgba(0,0,0,0.6)]">
        <RecordPanel />
        <MapPanel />
        <InfoPanel />
      </div>
    </main>
  );
}
